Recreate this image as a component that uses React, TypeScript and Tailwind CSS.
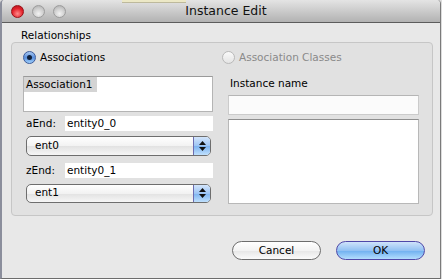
import React from 'react';

const font = "font-['DejaVu_Sans',sans-serif]";

const TrafficLight: React.FC<{ red?: boolean }> = ({ red }) => (
  <div
    className={`w-[13px] h-[13px] rounded-full border ${
      red
        ? 'border-[#9b1016] bg-[radial-gradient(circle_at_50%_70%,#ff8a8a_0%,#e3232c_55%,#a8111a_100%)]'
        : 'border-[#9c9c9c] bg-[radial-gradient(circle_at_50%_70%,#f2f2f2_0%,#cdcdcd_55%,#a9a9a9_100%)]'
    }`}
  />
);

const Radio: React.FC<{ label: string; checked?: boolean; disabled?: boolean }> = ({ label, checked, disabled }) => (
  <div className="flex items-center h-[13px]">
    {checked ? (
      <div className="w-[13px] h-[13px] rounded-full border border-[#3b5a9a] bg-[linear-gradient(#a9c9f2,#5a8fdd_50%,#9fd0fb)] flex items-center justify-center">
        <div className="w-[5px] h-[5px] rounded-full bg-[#10203a]" />
      </div>
    ) : (
      <div className="w-[13px] h-[13px] rounded-full border border-[#b9b9b9] bg-[linear-gradient(#fafafa,#e4e4e4)]" />
    )}
    <span className={`ml-[4px] text-[10.5px] leading-[13px] ${disabled ? 'text-[#8a8a8a]' : 'text-black'}`}>{label}</span>
  </div>
);

const Popup: React.FC<{ value: string; h: string }> = ({ value, h }) => (
  <div className={`ml-[3px] w-[185px] ${h} flex rounded-[5px] border border-[#6e6e6e] overflow-hidden bg-[linear-gradient(#ffffff,#f2f2f2_50%,#e2e2e2_51%,#f6f6f6)]`}>
    <div className="flex-1 pl-[8px] flex items-center text-[10.5px] text-black">{value}</div>
    <div className="w-[17px] border-l border-[#6c6cb0] bg-[linear-gradient(#d3e5fb,#9cc4f4_50%,#7db3f0_51%,#bfe0fd)] flex flex-col items-center justify-center gap-[2px]">
      <svg width="7" height="4" viewBox="0 0 7 4"><path d="M3.5 0 L7 4 L0 4 Z" fill="#111" /></svg>
      <svg width="7" height="4" viewBox="0 0 7 4"><path d="M0 0 L7 0 L3.5 4 Z" fill="#111" /></svg>
    </div>
  </div>
);

const EndRow: React.FC<{ label: string; value: string; className: string }> = ({ label, value, className }) => (
  <div className={`flex items-center ${className}`}>
    <span className="ml-[3px] w-[39px] text-[10.5px] text-black">{label}</span>
    <div className="w-[148px] h-[15px] bg-white pl-[2px] flex items-center text-[10.5px] text-black">{value}</div>
  </div>
);

const App: React.FC = () => {
  return (
    <div className={`w-[442px] h-[279px] bg-[#dcdcdc] overflow-hidden ${font}`}>
      <div className="relative w-[441px] h-[279px] flex flex-col bg-[#e8e8e8] border-l-2 border-r border-b border-l-[#8b8e9c] border-r-[#7a7a7a] border-b-[#6c6c6c] rounded-t-[4px]">
        <div className="absolute left-[120px] top-0 w-[64px] h-[3px] bg-[#ece8c6] border-b border-[#bdb99c]" />

        {/* title bar */}
        <div className="h-[23px] flex items-center border-b border-[#5c5c5c] bg-[linear-gradient(#e4e4e4,#b2b2b2)] rounded-t-[4px]">
          <div className="flex items-center gap-[8px] pl-[9px] pt-[1px]">
            <TrafficLight red />
            <TrafficLight />
            <TrafficLight />
          </div>
          <div className="flex-1 text-center pr-[54px] pt-[1px] text-[12.5px] text-[#111]">Instance Edit</div>
        </div>

        {/* content */}
        <div className="pl-[9px] pr-[7px] flex flex-col">
          <div className="mt-[5px] ml-[10px] h-[14px] leading-[14px] text-[10.5px] text-black">Relationships</div>
          <div className="h-[174px] rounded-[4px] border border-[#c6c6c6] bg-[#e1e1e1] flex pl-[11px] pr-[13px] pt-[8px]">
            {/* left column */}
            <div className="w-[191px] flex flex-col">
              <Radio label="Associations" checked />
              <div className="mt-[12px] h-[36px] w-[190px] bg-white border border-[#b4b4b4] border-t-[#9a9a9a] p-0">
                <div className="w-[73px] h-[15px] bg-[#d4d4d4] pl-[2px] flex items-center text-[10.5px] text-black">Association1</div>
              </div>
              <EndRow label="aEnd:" value="entity0_0" className="mt-[4px]" />
              <div className="mt-[4px]"><Popup value="ent0" h="h-[20px]" /></div>
              <EndRow label="zEnd:" value="entity0_1" className="mt-[7px]" />
              <div className="mt-[5px]"><Popup value="ent1" h="h-[19px]" /></div>
            </div>
            {/* right column */}
            <div className="ml-[14px] flex-1 flex flex-col">
              <div className="-ml-[6px]"><Radio label="Association Classes" disabled /></div>
              <div className="mt-[12px] ml-[2px] h-[14px] leading-[14px] text-[10.5px] text-black">Instance name</div>
              <div className="mt-[5px] h-[20px] bg-[#fbfbfb] border border-[#cbcbcb] border-t-[#b5b5b5]" />
              <div className="mt-[4px] h-[85px] bg-white border border-[#b8b8b8] border-t-[#8e8e8e]" />
            </div>
          </div>
          {/* buttons */}
          <div className="mt-[25px] flex justify-end gap-[15px] pr-[8px]">
            <button className="w-[89px] h-[19px] rounded-full border border-[#6d6d6d] bg-[linear-gradient(#ffffff,#f3f3f3_50%,#e6e6e6_51%,#fbfbfb)] text-[10.5px] text-black leading-none">
              Cancel
            </button>
            <button className="w-[89px] h-[19px] rounded-full border border-[#4f48a8] bg-[linear-gradient(#cfe3fb,#92c1f3_50%,#6eaff0_51%,#b3ddfd)] text-[10.5px] text-black leading-none">
              OK
            </button>
          </div>
        </div>
      </div>
    </div>
  );
};

export default App;
